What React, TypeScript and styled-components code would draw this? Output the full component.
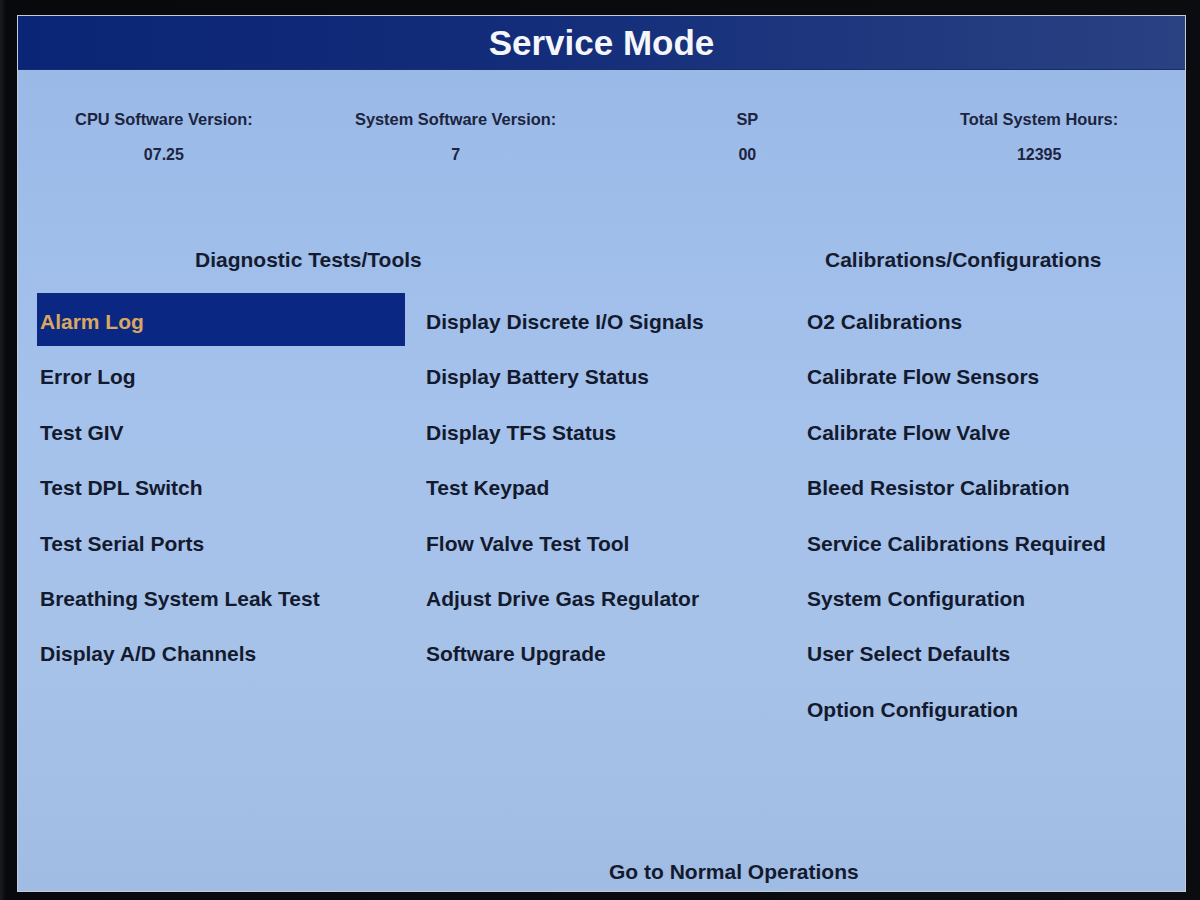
import { createGlobalStyle, styled } from 'styled-components';

const GlobalStyle = createGlobalStyle`
  html, body {
    margin: 0;
    padding: 0;
    background: #0b0c10;
  }
  body {
    font-family: 'Liberation Sans', Arial, sans-serif;
    width: 1200px;
    height: 900px;
    overflow: hidden;
  }
`;

const infoItems = [
  { label: 'CPU Software Version:', value: '07.25' },
  { label: 'System Software Version:', value: '7' },
  { label: 'SP', value: '00' },
  { label: 'Total System Hours:', value: '12395' },
];

const diagnosticsLeft = [
  'Alarm Log',
  'Error Log',
  'Test GIV',
  'Test DPL Switch',
  'Test Serial Ports',
  'Breathing System Leak Test',
  'Display A/D Channels',
];

const diagnosticsRight = [
  'Display Discrete I/O Signals',
  'Display Battery Status',
  'Display TFS Status',
  'Test Keypad',
  'Flow Valve Test Tool',
  'Adjust Drive Gas Regulator',
  'Software Upgrade',
];

const calibrations = [
  'O2 Calibrations',
  'Calibrate Flow Sensors',
  'Calibrate Flow Valve',
  'Bleed Resistor Calibration',
  'Service Calibrations Required',
  'System Configuration',
  'User Select Defaults',
  'Option Configuration',
];

const App = () => {
  const selected = 'Alarm Log';

  return (
    <>
      <GlobalStyle />
      <Bezel>
        <Screen>
          <TitleBar>
            <Title>Service Mode</Title>
          </TitleBar>

          <InfoGrid>
            {infoItems.map((item) => (
              <InfoCell key={item.label}>
                <InfoLabel>{item.label}</InfoLabel>
                <InfoValue>{item.value}</InfoValue>
              </InfoCell>
            ))}
          </InfoGrid>

          <MenuGrid>
            <SectionHeading $span="1 / 3" $indent={158}>
              Diagnostic Tests/Tools
            </SectionHeading>
            <SectionHeading $span="3 / 4" $indent={21}>
              Calibrations/Configurations
            </SectionHeading>

            <MenuList>
              {diagnosticsLeft.map((name) => (
                <MenuItem key={name} $selected={name === selected}>
                  {name}
                </MenuItem>
              ))}
            </MenuList>
            <MenuList>
              {diagnosticsRight.map((name) => (
                <MenuItem key={name} $selected={name === selected}>
                  {name}
                </MenuItem>
              ))}
            </MenuList>
            <MenuList>
              {calibrations.map((name) => (
                <MenuItem key={name} $selected={name === selected}>
                  {name}
                </MenuItem>
              ))}
            </MenuList>
          </MenuGrid>

          <Footer>
            <FooterLink>Go to Normal Operations</FooterLink>
          </Footer>
        </Screen>
      </Bezel>
    </>
  );
};

export default App;

const Bezel = styled.div`
  width: 1200px;
  height: 900px;
  padding: 15px 0 0 17px;
  box-sizing: border-box;
  background: linear-gradient(90deg, #1a1c22 0px, #08090c 6px, #0b0c10 100%);
`;

const Screen = styled.div`
  width: 1169px;
  height: 877px;
  box-sizing: border-box;
  border: 1px solid #c3ccd8;
  display: flex;
  flex-direction: column;
  background: linear-gradient(180deg, #98b8e6 0%, #a5c2ec 45%, #a7c2e8 75%, #a1bce2 100%);
`;

const TitleBar = styled.div`
  height: 53px;
  display: flex;
  align-items: center;
  justify-content: center;
  background: linear-gradient(90deg, #0b2576 0%, #132d7a 45%, #2a4282 100%);
  border-bottom: 1px solid #1a2d6a;
`;

const Title = styled.h1`
  margin: 0;
  font-size: 35px;
  font-weight: 700;
  line-height: 1;
  color: #f4f6fa;
`;

const InfoGrid = styled.div`
  display: grid;
  grid-template-columns: repeat(4, 1fr);
  margin-top: 39px;
`;

const InfoCell = styled.div`
  display: flex;
  flex-direction: column;
  align-items: center;
  gap: 16px;
`;

const InfoLabel = styled.div`
  font-size: 16.4px;
  font-weight: 700;
  line-height: 20px;
  color: #1c2440;
  white-space: nowrap;
`;

const InfoValue = styled.div`
  font-size: 16px;
  font-weight: 700;
  line-height: 20px;
  color: #1c2440;
`;

const MenuGrid = styled.div`
  display: grid;
  grid-template-columns: 368px 363px 1fr;
  column-gap: 18px;
  padding-left: 19px;
  margin-top: 83px;
`;

const SectionHeading = styled.div<{ $span: string; $indent: number }>`
  grid-column: ${(p) => p.$span};
  grid-row: 1;
  padding-left: ${(p) => p.$indent}px;
  margin-bottom: 21px;
  font-size: 21px;
  font-weight: 700;
  line-height: 24px;
  color: #151b30;
  white-space: nowrap;
`;

const MenuList = styled.div`
  grid-row: 2;
  display: flex;
  flex-direction: column;
  gap: 2.4px;
`;

const MenuItem = styled.div<{ $selected?: boolean }>`
  height: 53px;
  box-sizing: border-box;
  padding: 5px 0 0 3px;
  display: flex;
  align-items: center;
  font-size: 21px;
  font-weight: 700;
  color: ${(p) => (p.$selected ? '#d9a85e' : '#141a2e')};
  background: ${(p) => (p.$selected ? '#0a2784' : 'transparent')};
  white-space: nowrap;
`;

const Footer = styled.div`
  margin-top: auto;
  padding: 0 0 7px 591px;
`;

const FooterLink = styled.div`
  font-size: 21px;
  font-weight: 700;
  line-height: 24px;
  color: #141a2e;
  white-space: nowrap;
`;
